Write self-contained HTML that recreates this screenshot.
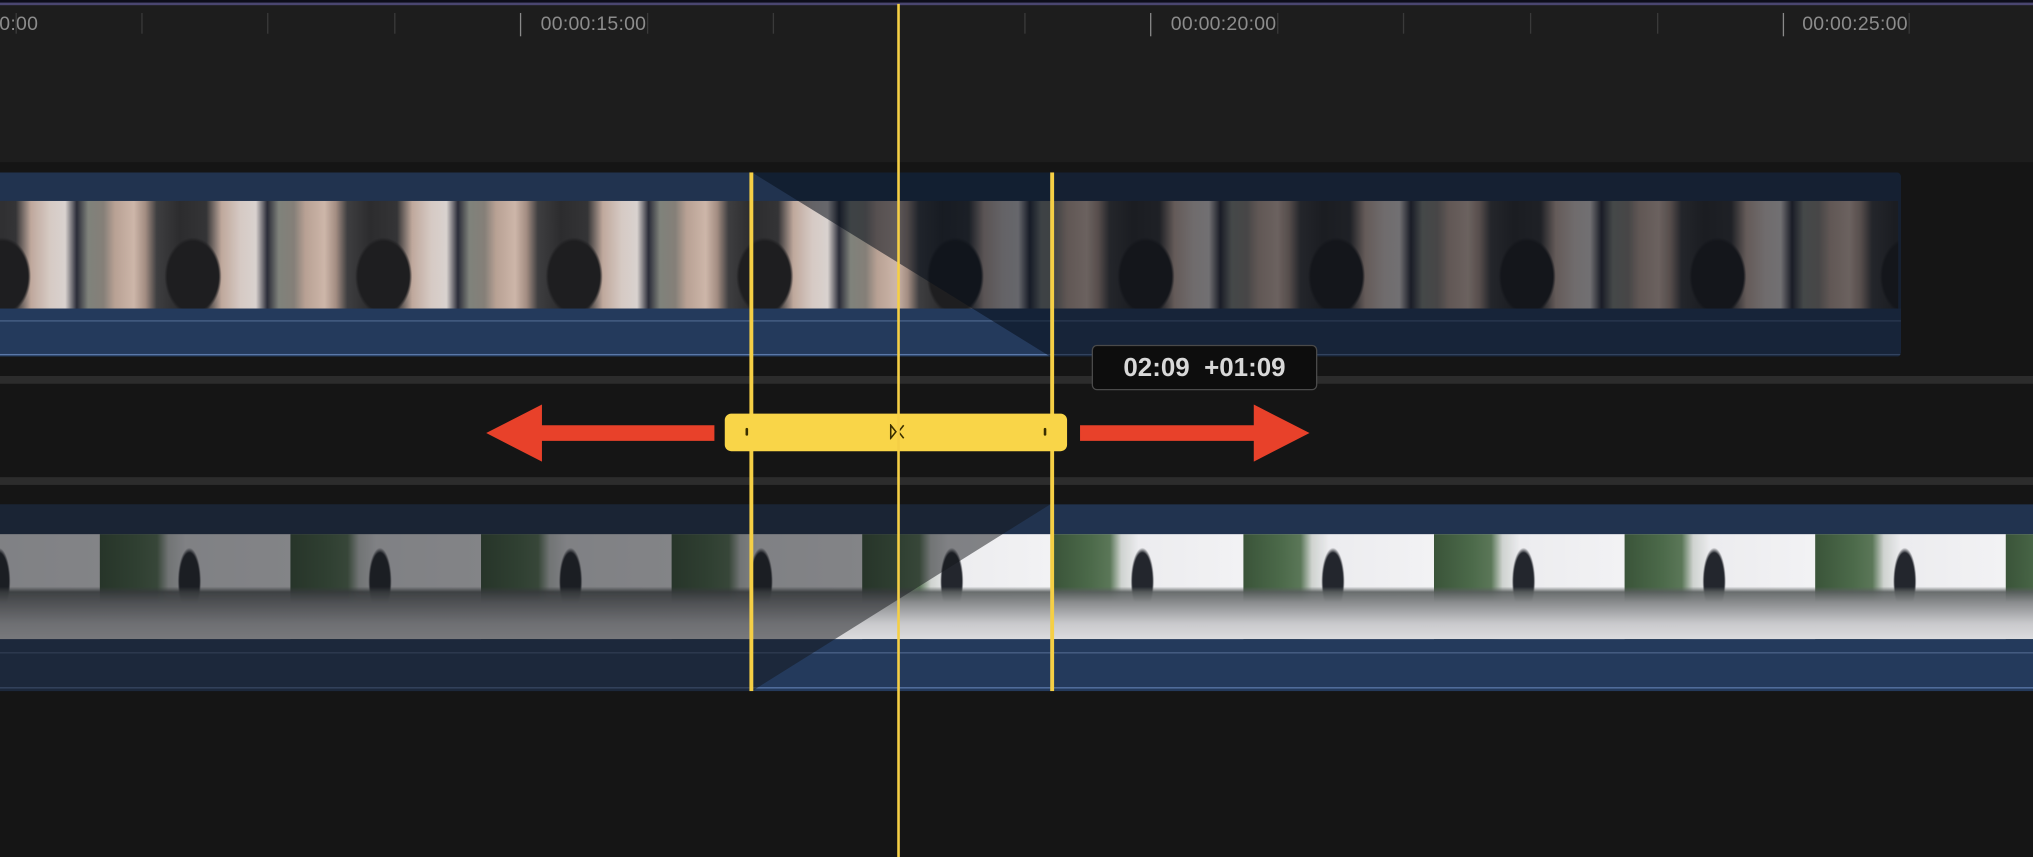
<!DOCTYPE html>
<html><head><meta charset="utf-8"><style>
html,body{margin:0;padding:0;background:#1d1d1d;overflow:hidden;width:2033px;height:857px}
#s{position:absolute;left:0;top:0;width:1568px;height:661px;transform:scale(1.29656);transform-origin:0 0;background:#1d1d1d;font-family:"Liberation Sans",sans-serif}
.a{position:absolute}
.lab{position:absolute;top:10px;font-size:15px;color:#8c8c8c;letter-spacing:.2px}
.tk{position:absolute;top:10px;width:1px;height:16px;background:#3a3a3a}
.tm{position:absolute;top:10px;width:1px;height:18px;background:#8a8a8a}
.up{background:
 radial-gradient(ellipse 22px 30px at 55% 70%,#1e1e20 0,#1e1e20 90%,rgba(0,0,0,0) 100%),
 linear-gradient(90deg,#7f827b 0,#857f78 8%,#b8a194 14%,#cdb6a9 24%,#a38d82 30%,#3e3e40 36%,#2c2c2e 48%,#343436 62%,#bfa89c 70%,#d6cac4 80%,#d9d2cf 88%,#2a2c38 94%,#7f827b 100%);
 background-size:147px 100%;background-position:68px 0}
.lo{background:
 linear-gradient(180deg,rgba(0,0,0,0) 50%,rgba(90,95,95,.9) 55%,#8a8c8e 65%,#c9c9cc 85%,#dcdcde 100%),
 radial-gradient(ellipse 9px 26px at 47% 45%,#23262d 0,#23262d 85%,rgba(0,0,0,0) 100%),
 linear-gradient(90deg,#3a5439 0,#4c6a4a 20%,#5b7758 30%,#cfd3d0 36%,#ececef 45%,#f2f2f4 100%);
 background-size:147px 100%;background-position:77px 0}
</style></head><body><div id="s">
<div class="a" style="left:0;top:0;width:1568px;height:2px;background:#0d0d1a"></div>
<div class="a" style="left:0;top:2px;width:1568px;height:2px;background:#4a4670"></div>
<div class="a" style="left:0;top:125px;width:1568px;height:536px;background:#151515"></div>
<div class="lab" style="left:-52px">00:00:10:00</div>
<div class="lab" style="left:417px">00:00:15:00</div>
<div class="lab" style="left:903px">00:00:20:00</div>
<div class="lab" style="left:1390px">00:00:25:00</div>
<div class="tm" style="left:401px"></div><div class="tm" style="left:887px"></div><div class="tm" style="left:1375px"></div>
<div class="tk" style="left:12px"></div><div class="tk" style="left:109px"></div><div class="tk" style="left:206px"></div><div class="tk" style="left:304px"></div>
<div class="tk" style="left:499px"></div><div class="tk" style="left:596px"></div><div class="tk" style="left:790px"></div>
<div class="tk" style="left:985px"></div><div class="tk" style="left:1082px"></div><div class="tk" style="left:1180px"></div>
<div class="tk" style="left:1278px"></div><div class="tk" style="left:1472px"></div>

<!-- upper clip -->
<div class="a" style="left:0;top:133px;width:1466px;height:142px;background:#21334f;border-radius:0 3px 3px 0;overflow:hidden">
 <div class="a up" style="left:0;top:22px;width:1464px;height:83px"></div>
 <div class="a" style="left:0;top:105px;width:1466px;height:37px;background:#243a5c"></div>
 <div class="a" style="left:0;top:114px;width:1466px;height:1px;background:#4a6288"></div>
 <div class="a" style="left:0;top:140px;width:1466px;height:1px;background:#5a78a8"></div>
 <div class="a" style="left:580px;top:0;width:230px;height:142px;background:rgba(8,14,26,.55);clip-path:polygon(0 0,100% 0,100% 100%)"></div>
 <div class="a" style="left:810px;top:0;width:656px;height:142px;background:rgba(10,14,22,.5)"></div>
</div>
<div class="a" style="left:0;top:290px;width:1568px;height:6px;background:#2c2c2c"></div>
<div class="a" style="left:0;top:368px;width:1568px;height:6px;background:#2c2c2c"></div>

<!-- lower clip -->
<div class="a" style="left:0;top:389px;width:1568px;height:144px;background:#21334f;overflow:hidden">
 <div class="a lo" style="left:0;top:23px;width:1568px;height:81px"></div>
 <div class="a" style="left:0;top:104px;width:1568px;height:40px;background:#243a5c"></div>
 <div class="a" style="left:0;top:114px;width:1568px;height:1px;background:#4a6288"></div>
 <div class="a" style="left:0;top:141px;width:1568px;height:1px;background:#5a78a8"></div>
 <div class="a" style="left:0;top:0;width:580px;height:144px;background:rgba(20,22,26,.5)"></div>
 <div class="a" style="left:580px;top:0;width:230px;height:144px;background:rgba(20,22,26,.5);clip-path:polygon(0 0,100% 0,0 100%)"></div>
</div>

<!-- edit lines -->
<div class="a" style="left:578px;top:133px;width:3px;height:400px;background:#f5cf45"></div>
<div class="a" style="left:810px;top:133px;width:3px;height:400px;background:#f5cf45"></div>

<!-- arrows -->
<svg class="a" style="left:370px;top:308px" width="190" height="52"><polygon points="5,26 48,4 48,20 181,20 181,32 48,32 48,48" fill="#e8412a"/></svg>
<svg class="a" style="left:830px;top:308px" width="185" height="52"><polygon points="180,26 137,4 137,20 3,20 3,32 137,32 137,48" fill="#e8412a"/></svg>

<!-- yellow bar -->
<div class="a" style="left:559px;top:319px;width:264px;height:29px;background:#f9d548;border-radius:5px"></div>
<div class="a" style="left:575px;top:330px;width:2px;height:6px;background:#3a2f00;border-radius:1px"></div>
<div class="a" style="left:805px;top:330px;width:2px;height:6px;background:#3a2f00;border-radius:1px"></div>
<svg class="a" style="left:685px;top:327px" width="14" height="12"><path d="M2 1 L6 6 L2 11 Z M12 1 L8 6 L12 11" fill="none" stroke="#3a2f00" stroke-width="1.2"/></svg>

<!-- playhead -->
<div class="a" style="left:692px;top:3px;width:1.5px;height:658px;background:#f5cf45"></div>

<!-- tooltip -->
<div class="a" style="left:842px;top:266px;width:172px;height:33px;background:#0d0d0d;border:1px solid #4a4a4a;border-radius:4px;color:#d8d8d8;font-weight:bold;font-size:20px;line-height:35px;text-align:center;white-space:pre">02:09  +01:09</div>
</div></body></html>
